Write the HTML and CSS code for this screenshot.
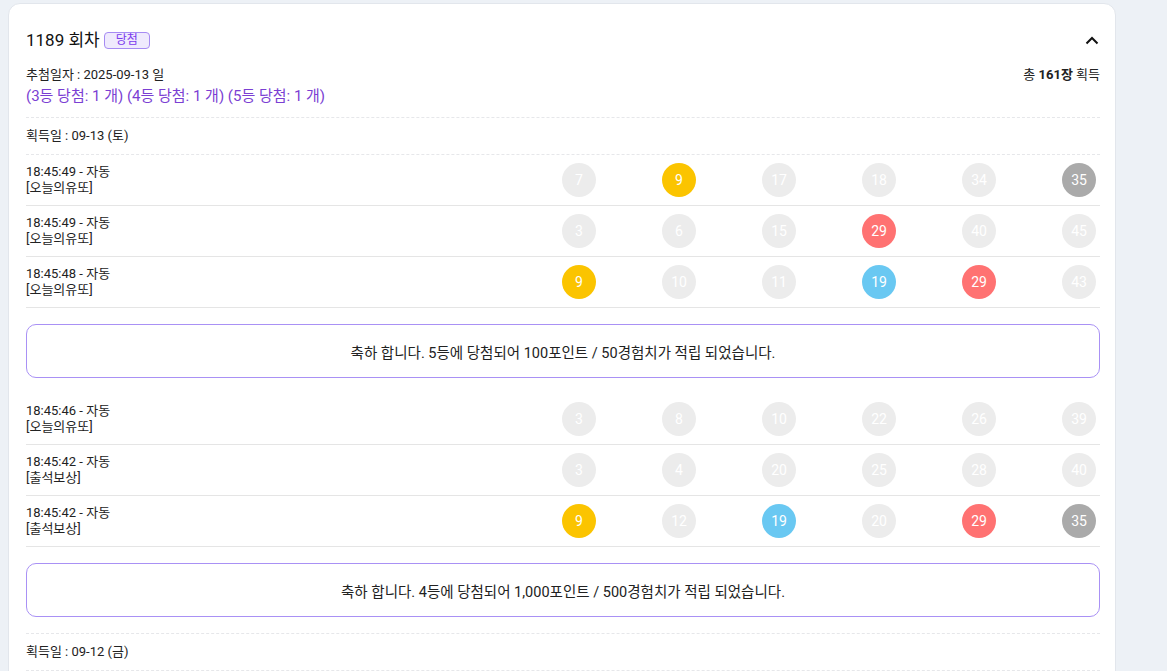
FILE: index.html
```html
<!DOCTYPE html>
<html lang="ko">
<head>
<meta charset="utf-8">
<title>1189 회차</title>
<link rel="stylesheet" href="styles.css">
</head>
<body>
<div class="card">
  <div class="head">
    <div class="title">1189 회차 <span class="badge">당첨</span></div>
    <svg class="chev" width="14" height="9" viewBox="0 0 14 9"><path d="M1.5 7.5 L7 2 L12.5 7.5" fill="none" stroke="#111" stroke-width="2"/></svg>
  </div>
  <div class="meta">
    <span>추첨일자 : 2025-09-13 일</span>
    <span>총 <b>161장</b> 획득</span>
  </div>
  <div class="wins">(3등 당첨: 1 개) (4등 당첨: 1 개) (5등 당첨: 1 개)</div>

  <div class="day">획득일 : 09-13 (토)</div>

  <div class="row">
    <div class="info">18:45:49 - 자동<br>[오늘의유또]</div>
    <div class="balls"><span class="ball">7</span><span class="ball y">9</span><span class="ball">17</span><span class="ball">18</span><span class="ball">34</span><span class="ball g">35</span></div>
  </div>
  <div class="row">
    <div class="info">18:45:49 - 자동<br>[오늘의유또]</div>
    <div class="balls"><span class="ball">3</span><span class="ball">6</span><span class="ball">15</span><span class="ball r">29</span><span class="ball">40</span><span class="ball">45</span></div>
  </div>
  <div class="row">
    <div class="info">18:45:48 - 자동<br>[오늘의유또]</div>
    <div class="balls"><span class="ball y">9</span><span class="ball">10</span><span class="ball">11</span><span class="ball b">19</span><span class="ball r">29</span><span class="ball">43</span></div>
  </div>
  <div class="msg">축하 합니다. 5등에 당첨되어 100포인트 / 50경험치가 적립 되었습니다.</div>

  <div class="row">
    <div class="info">18:45:46 - 자동<br>[오늘의유또]</div>
    <div class="balls"><span class="ball">3</span><span class="ball">8</span><span class="ball">10</span><span class="ball">22</span><span class="ball">26</span><span class="ball">39</span></div>
  </div>
  <div class="row">
    <div class="info">18:45:42 - 자동<br>[출석보상]</div>
    <div class="balls"><span class="ball">3</span><span class="ball">4</span><span class="ball">20</span><span class="ball">25</span><span class="ball">28</span><span class="ball">40</span></div>
  </div>
  <div class="row">
    <div class="info">18:45:42 - 자동<br>[출석보상]</div>
    <div class="balls"><span class="ball y">9</span><span class="ball">12</span><span class="ball b">19</span><span class="ball">20</span><span class="ball r">29</span><span class="ball g">35</span></div>
  </div>
  <div class="msg">축하 합니다. 4등에 당첨되어 1,000포인트 / 500경험치가 적립 되었습니다.</div>

  <div class="day">획득일 : 09-12 (금)</div>
</div>
</body>
</html>
```
FILE: styles.css
```css
html, body {
  margin: 0;
  padding: 0;
}
body {
  background: #edf1f6;
  font-family: Roboto, "Noto Sans CJK KR", sans-serif;
  color: #222;
  height: 671px;
  overflow: hidden;
}
.card {
  margin: 3px 0 0 8px;
  width: 1074px;
  padding: 0 15px 40px 17px;
  background: #fff;
  border: 1px solid #e2e6ec;
  border-radius: 12px;
  box-sizing: content-box;
}
.head {
  display: flex;
  justify-content: space-between;
  align-items: center;
  padding-top: 22px;
  height: 28px;
}
.title {
  font-size: 17px;
  line-height: 28px;
  color: #111;
  display: flex;
  align-items: center;
  gap: 4px;
}
.badge {
  display: inline-block;
  font-size: 12px;
  line-height: 15px;
  padding: 0 11px;
  color: #7c3aed;
  background: #efeafd;
  border: 1px solid #a68bf3;
  border-radius: 4px;
}
.chev {
  display: block;
  margin-right: 1px;
}
.meta {
  display: flex;
  justify-content: space-between;
  font-size: 13px;
  line-height: 18px;
  margin-top: 12px;
}
.meta b {
  font-weight: 700;
}
.wins {
  font-size: 15px;
  line-height: 20px;
  color: #7b3fd3;
  margin-top: 2px;
  margin-bottom: 11px;
}
.day {
  font-size: 13px;
  line-height: 18px;
  padding: 9px 0;
  border-top: 1px dashed #e6e7ea;
  border-bottom: 1px dashed #e6e7ea;
}
.row {
  display: flex;
  justify-content: space-between;
  align-items: center;
  padding: 8px 0;
  border-bottom: 1px solid #e5e5e5;
}
.info {
  font-size: 13px;
  line-height: 16px;
}
.balls {
  display: flex;
  gap: 66px;
  margin-right: 4px;
}
.ball {
  width: 34px;
  height: 34px;
  border-radius: 50%;
  background: #ececec;
  color: #fff;
  font-size: 14px;
  display: flex;
  align-items: center;
  justify-content: center;
}
.ball.y { background: #fbc400; }
.ball.b { background: #69c8f2; }
.ball.r { background: #ff7272; }
.ball.g { background: #aaaaaa; }
.msg {
  margin: 16px 0;
  height: 52px;
  border: 1px solid #a991f5;
  border-radius: 10px;
  display: flex;
  align-items: center;
  justify-content: center;
  font-size: 14.5px;
  color: #222;
}
```
